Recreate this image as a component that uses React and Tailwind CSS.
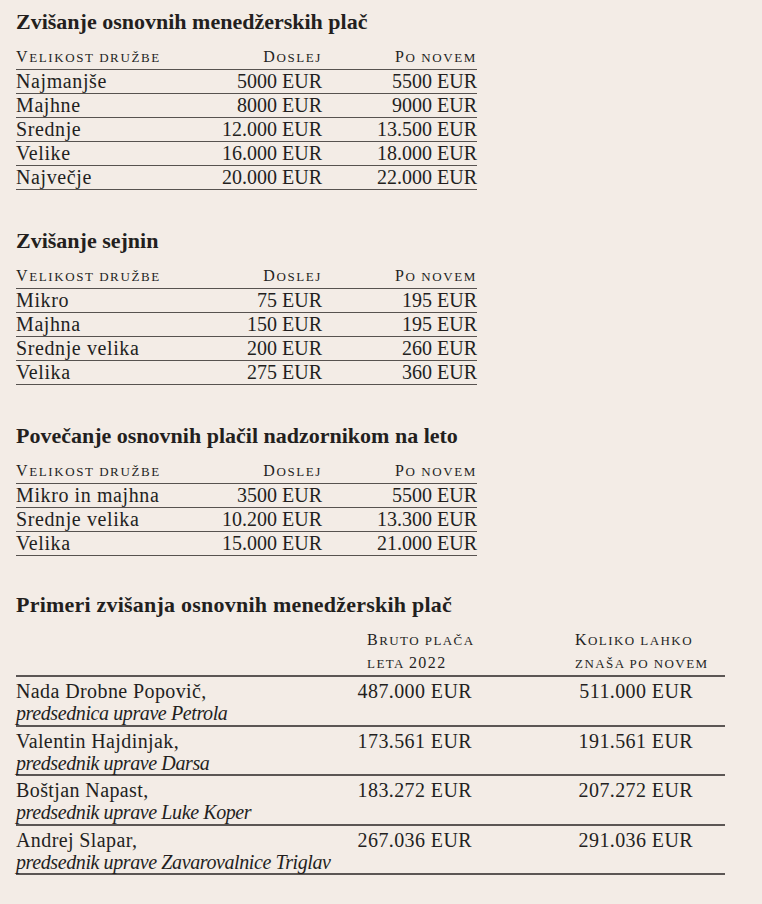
const sections = [
  {
    title: "Zvišanje osnovnih menedžerskih plač",
    rows: [
      ["Najmanjše", "5000 EUR", "5500 EUR"],
      ["Majhne", "8000 EUR", "9000 EUR"],
      ["Srednje", "12.000 EUR", "13.500 EUR"],
      ["Velike", "16.000 EUR", "18.000 EUR"],
      ["Največje", "20.000 EUR", "22.000 EUR"],
    ],
  },
  {
    title: "Zvišanje sejnin",
    rows: [
      ["Mikro", "75 EUR", "195 EUR"],
      ["Majhna", "150 EUR", "195 EUR"],
      ["Srednje velika", "200 EUR", "260 EUR"],
      ["Velika", "275 EUR", "360 EUR"],
    ],
  },
  {
    title: "Povečanje osnovnih plačil nadzornikom na leto",
    rows: [
      ["Mikro in majhna", "3500 EUR", "5500 EUR"],
      ["Srednje velika", "10.200 EUR", "13.300 EUR"],
      ["Velika", "15.000 EUR", "21.000 EUR"],
    ],
  },
];

const examples = [
  ["Nada Drobne Popovič,", "predsednica uprave Petrola", "487.000 EUR", "511.000 EUR"],
  ["Valentin Hajdinjak,", "predsednik uprave Darsa", "173.561 EUR", "191.561 EUR"],
  ["Boštjan Napast,", "predsednik uprave Luke Koper", "183.272 EUR", "207.272 EUR"],
  ["Andrej Slapar,", "predsednik uprave Zavarovalnice Triglav", "267.036 EUR", "291.036 EUR"],
];

// small caps by hand: capitals and digits full size, lowercase set as smaller capitals
function SmallCaps({ text }) {
  const parts = [];
  let buf = "";
  let small = null;
  for (const ch of text) {
    const isSmall = ch !== ch.toUpperCase() || (ch === " " && small);
    if (small !== null && isSmall !== small) {
      parts.push([buf, small]);
      buf = "";
    }
    small = isSmall;
    buf += ch;
  }
  if (buf) parts.push([buf, small]);
  return parts.map(([t, s], i) =>
    s ? (
      <span key={i} className="text-[13px] uppercase">
        {t}
      </span>
    ) : (
      <span key={i}>{t}</span>
    )
  );
}

function SizeTable({ title, rows }) {
  return (
    <section className="w-[461px] mb-[39px]">
      <h2 className="h-[24px] leading-[24px] text-[22px] font-bold">{title}</h2>
      <div className="mt-[12px] flex h-[24px] items-end pb-[1px] border-b-[1.5px] border-[#57524f] text-[16px] leading-[20px] tracking-[0.1em]">
        <span className="flex-1"><SmallCaps text="Velikost družbe" /></span>
        <span className="w-[120px] text-right"><SmallCaps text="Doslej" /></span>
        <span className="w-[155px] text-right"><SmallCaps text="Po novem" /></span>
      </div>
      {rows.map((r) => (
        <div key={r[0]} className="flex h-[24px] items-center pb-[2px] border-b-[1.5px] border-[#57524f] text-[20px] leading-[22px]">
          <span className="flex-1 tracking-[0.03em]">{r[0]}</span>
          <span className="w-[120px] text-right">{r[1]}</span>
          <span className="w-[155px] text-right">{r[2]}</span>
        </div>
      ))}
    </section>
  );
}

export default function App() {
  return (
    <div
      className="min-h-[904px] w-[762px] bg-[#f3ece6] px-[16px] pt-[10px] text-[#231f1e]"
      style={{ fontFamily: '"Liberation Serif", "Times New Roman", serif' }}
    >
      {sections.map((s) => (
        <SizeTable key={s.title} title={s.title} rows={s.rows} />
      ))}

      <section className="w-[709px] -mt-[2px]">
        <h2 className="h-[24px] leading-[24px] text-[22px] font-bold tracking-[0.01em]">
          Primeri zvišanja osnovnih menedžerskih plač
        </h2>
        <div className="mt-[12px] flex border-b-2 border-[#5b5654] text-[16px] leading-[22px] tracking-[0.09em]">
          <span className="w-[329px]" />
          <span className="w-[215px] pl-[22px]">
            <SmallCaps text="Bruto plača" />
            <br />
            <SmallCaps text="leta 2022" />
          </span>
          <span className="flex-1 pl-[15px]">
            <SmallCaps text="Koliko lahko" />
            <br />
            <SmallCaps text="znaša po novem" />
          </span>
        </div>
        {examples.map((e) => (
          <div key={e[0]} className="flex h-[49.5px] border-b-2 border-[#5b5654] pt-[3px] text-[20px] leading-[22px]">
            <div className="w-[329px]">
              <div className="tracking-[0.02em]">{e[0]}</div>
              <div className="italic tracking-[-0.02em]">{e[1]}</div>
            </div>
            <div className="w-[215px] tracking-[0.02em]">
              <div className="w-[127px] text-right">{e[2]}</div>
            </div>
            <div className="flex-1 tracking-[0.02em]">
              <div className="w-[133px] text-right">{e[3]}</div>
            </div>
          </div>
        ))}
      </section>
    </div>
  );
}
